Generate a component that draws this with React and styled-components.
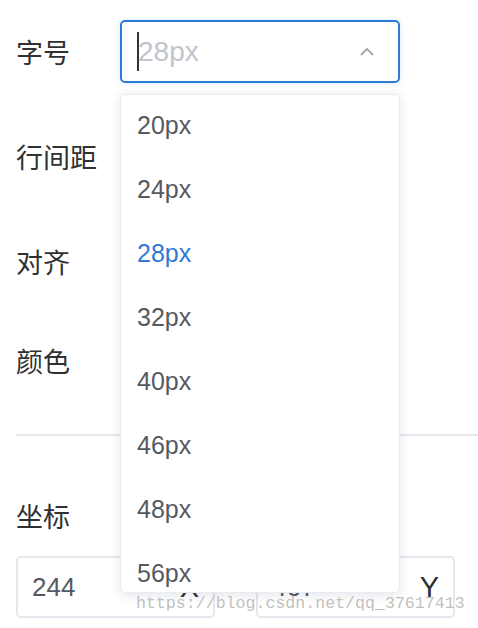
import React from "react";
import styled, { createGlobalStyle } from "styled-components";

const GlobalStyle = createGlobalStyle`
  html, body {
    margin: 0;
    padding: 0;
    background: #fff;
  }
  body {
    font-family: "Liberation Sans", "Noto Sans CJK SC", sans-serif;
    overflow: hidden;
  }
`;

const Page = styled.div`
  position: relative;
  width: 478px;
  height: 628px;
  padding-top: 20px;
  box-sizing: border-box;
  overflow: hidden;
`;

const Form = styled.div`
  padding-left: 16px;
`;

const FormItem = styled.div`
  display: flex;
  align-items: center;
  height: 63px;
  margin-bottom: ${({ gap }) => gap}px;
`;

const Label = styled.div`
  width: 104px;
  font-size: 27px;
  color: #303133;
  font-family: "Noto Sans CJK SC", sans-serif;
`;

const SelectWrap = styled.div`
  position: relative;
`;

const SelectBox = styled.div`
  width: 280px;
  height: 63px;
  box-sizing: border-box;
  border: 2px solid #2f7ad4;
  border-radius: 5px;
  box-shadow: 0 0 4px rgba(64, 158, 255, 0.25);
  display: flex;
  align-items: center;
  padding: 0 20px 0 15px;
`;

const Caret = styled.span`
  width: 2px;
  height: 39px;
  background: #333;
  margin-right: -1px;
`;

const Placeholder = styled.span`
  flex: 1;
  font-size: 28px;
  color: #c0c4cc;
`;

const Chevron = styled.svg`
  width: 16px;
  height: 10px;
  margin-right: 3px;
`;

const Dropdown = styled.ul`
  position: absolute;
  top: 74px;
  left: 0;
  width: 280px;
  height: 499px;
  margin: 0;
  padding: 0;
  list-style: none;
  box-sizing: border-box;
  background: #fff;
  border: 1px solid #e9ebef;
  border-radius: 5px;
  box-shadow: 0 2px 12px rgba(30, 40, 90, 0.12);
  overflow: hidden;
  z-index: 5;
`;

const Option = styled.li`
  height: 64px;
  box-sizing: border-box;
  display: flex;
  align-items: center;
  padding: 0 0 4px 16px;
  font-size: 25px;
  color: ${({ active }) => (active ? "#2f7ad4" : "#555a60")};
`;

const Divider = styled.div`
  height: 2px;
  background: #e4e7ed;
  margin-left: 16px;
`;

const Section = styled.div`
  padding-left: 16px;
`;

const Title = styled.div`
  font-size: 27px;
  color: #303133;
  font-family: "Noto Sans CJK SC", sans-serif;
  height: 40px;
  line-height: 40px;
  margin: 60px 0 20px;
`;

const InputRow = styled.div`
  display: flex;
  gap: 41px;
`;

const Input = styled.div`
  width: 199px;
  height: 62px;
  box-sizing: border-box;
  border: 2px solid #e4e7ed;
  border-radius: 5px;
  display: flex;
  align-items: center;
  padding: 0 14px 0 14px;
`;

const Value = styled.span`
  flex: 1;
  font-size: 26px;
  color: #555a60;
`;

const Suffix = styled.span`
  font-size: 29px;
  color: #303133;
`;

const Watermark = styled.div`
  position: absolute;
  left: 136px;
  top: 594px;
  font-family: "Liberation Mono", "DejaVu Sans Mono", monospace;
  font-size: 16.6px;
  color: rgba(170, 170, 170, 0.75);
  text-shadow: 0 0 1px #fff;
  z-index: 10;
  white-space: nowrap;
`;

const sizes = ["20px", "24px", "28px", "32px", "40px", "46px", "48px", "56px"];

export default function App() {
  return (
    <>
      <GlobalStyle />
      <Page>
        <Form>
          <FormItem gap={42}>
            <Label>字号</Label>
            <SelectWrap>
              <SelectBox>
                <Caret />
                <Placeholder>28px</Placeholder>
                <Chevron viewBox="0 0 16 10">
                  <path d="M2 8 L8 2 L14 8" fill="none" stroke="#a8abb2" strokeWidth="2" />
                </Chevron>
              </SelectBox>
              <Dropdown>
                {sizes.map((s) => (
                  <Option key={s} active={s === "28px"}>
                    {s}
                  </Option>
                ))}
              </Dropdown>
            </SelectWrap>
          </FormItem>
          <FormItem gap={42}>
            <Label>行间距</Label>
          </FormItem>
          <FormItem gap={36}>
            <Label>对齐</Label>
          </FormItem>
          <FormItem gap={42}>
            <Label>颜色</Label>
          </FormItem>
        </Form>
        <Divider />
        <Section>
          <Title>坐标</Title>
          <InputRow>
            <Input>
              <Value>244</Value>
              <Suffix>X</Suffix>
            </Input>
            <Input>
              <Value>467</Value>
              <Suffix>Y</Suffix>
            </Input>
          </InputRow>
        </Section>
        <Watermark>https://blog.csdn.net/qq_37617413</Watermark>
      </Page>
    </>
  );
}
